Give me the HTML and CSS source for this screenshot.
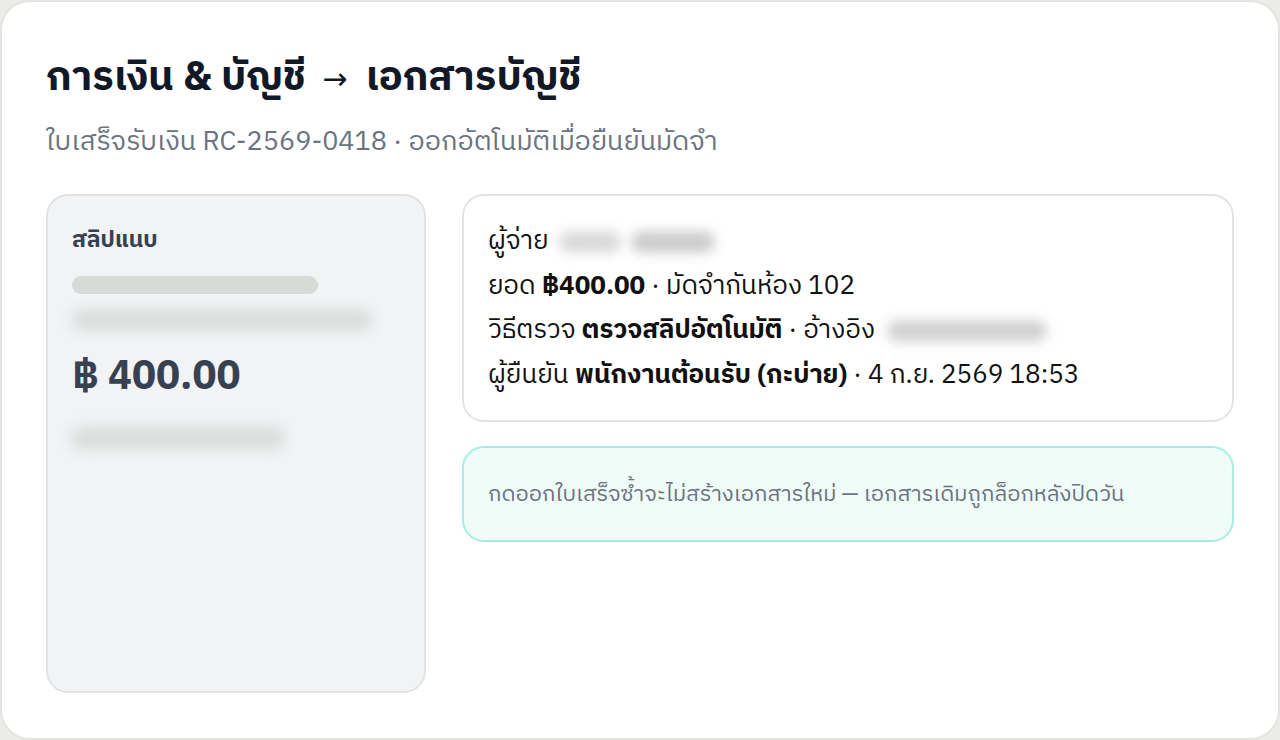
FILE: index.html
```html
<!DOCTYPE html>
<html lang="th">
<head>
<meta charset="utf-8">
<link rel="stylesheet" href="styles.css">
</head>
<body>
<div class="page">
  <h1 class="title">การเงิน &amp; บัญชี <span class="arrow">→</span> เอกสารบัญชี</h1>
  <p class="subtitle">ใบเสร็จรับเงิน RC-2569-0418 · ออกอัตโนมัติเมื่อยืนยันมัดจำ</p>
  <div class="main">
    <div class="slip">
      <div class="slip-label">สลิปแนบ</div>
      <div class="bar bar-solid"></div>
      <div class="bar bar-blur bar-wide"></div>
      <div class="slip-amount">฿ 400.00</div>
      <div class="bar bar-blur bar-short"></div>
    </div>
    <div class="side">
      <div class="info">
        <div class="row">ผู้จ่าย <span class="redact redact-name"><span class="blob blob-a"></span><span class="blob blob-b"></span></span></div>
        <div class="row">ยอด <b>฿400.00</b> · มัดจำกันห้อง 102</div>
        <div class="row">วิธีตรวจ <b>ตรวจสลิปอัตโนมัติ</b> · อ้างอิง <span class="redact redact-ref"><span class="blob blob-c"></span></span></div>
        <div class="row">ผู้ยืนยัน <b>พนักงานต้อนรับ (กะบ่าย)</b> · 4 ก.ย. 2569 18:53</div>
      </div>
      <div class="notice">กดออกใบเสร็จซ้ำจะไม่สร้างเอกสารใหม่ — เอกสารเดิมถูกล็อกหลังปิดวัน</div>
    </div>
  </div>
</div>
</body>
</html>
```

FILE: styles.css
```css
html, body {
  margin: 0;
  padding: 0;
  background: #ebebe8;
}
body {
  font-family: "IBM Plex Sans Thai", "Noto Sans Thai", "Liberation Sans", sans-serif;
  width: 1280px;
  height: 740px;
  overflow: hidden;
}
.page {
  box-sizing: border-box;
  width: 1280px;
  height: 740px;
  background: #ffffff;
  border: 2px solid #e3e3e0;
  border-radius: 30px;
  padding: 48px 44px 44px 44px;
  display: flex;
  flex-direction: column;
}
.title {
  margin: 0;
  height: 56px;
  font-size: 40px;
  line-height: 56px;
  font-weight: 700;
  color: #111827;
}
.arrow {
  display: inline-block;
  font-family: "DejaVu Sans", sans-serif;
  font-weight: 400;
  font-size: 30px;
  line-height: 30px;
  margin: 0 9px 0 7px;
  vertical-align: 1px;
}
.subtitle {
  margin: 16px 0 0 0;
  font-size: 27px;
  line-height: 40px;
  color: #6b7280;
}
.main {
  margin-top: 32px;
  display: flex;
  gap: 36px;
  flex: 1;
}
.slip {
  box-sizing: border-box;
  width: 380px;
  height: 499px;
  background: #f2f3f5;
  border: 2px solid #e2e3e1;
  border-radius: 22px;
  padding: 28px 24px;
  display: flex;
  flex-direction: column;
}
.slip-label {
  font-size: 23px;
  line-height: 32px;
  font-weight: 700;
  color: #374151;
}
.bar {
  border-radius: 9px;
  height: 18px;
}
.bar-solid {
  margin-top: 20px;
  width: 246px;
  background: #d6dbd8;
}
.bar-blur {
  background: #d8dcda;
  filter: blur(7px);
}
.bar-wide {
  margin-top: 16px;
  width: 300px;
  height: 20px;
}
.bar-short {
  margin-top: 25px;
  width: 212px;
  height: 22px;
}
.slip-amount {
  margin-top: 22px;
  font-size: 40px;
  line-height: 50px;
  font-weight: 700;
  color: #374151;
}
.side {
  flex: 1;
  display: flex;
  flex-direction: column;
  gap: 24px;
}
.info {
  box-sizing: border-box;
  height: 228px;
  border: 2px solid #e3e3e3;
  border-radius: 22px;
  padding: 24px 24px;
  font-size: 26px;
  line-height: 44.5px;
  color: #111111;
}
.row b {
  font-weight: 700;
}
.redact {
  display: inline-flex;
  vertical-align: middle;
  gap: 10px;
  height: 22px;
  filter: blur(6px);
}
.blob {
  display: block;
  height: 22px;
  border-radius: 11px;
}
.blob-a {
  width: 62px;
  background: #dadada;
}
.blob-b {
  width: 84px;
  background: #cdcdcd;
}
.blob-c {
  width: 160px;
  background: #d2d2d2;
}
.redact-name {
  margin-left: 4px;
}
.redact-ref {
  margin-left: 6px;
}
.notice {
  box-sizing: border-box;
  height: 96px;
  background: #effcf8;
  border: 2px solid #a6ede0;
  border-radius: 22px;
  padding: 0 24px;
  display: flex;
  align-items: center;
  font-size: 22px;
  color: #6b7280;
}
```
